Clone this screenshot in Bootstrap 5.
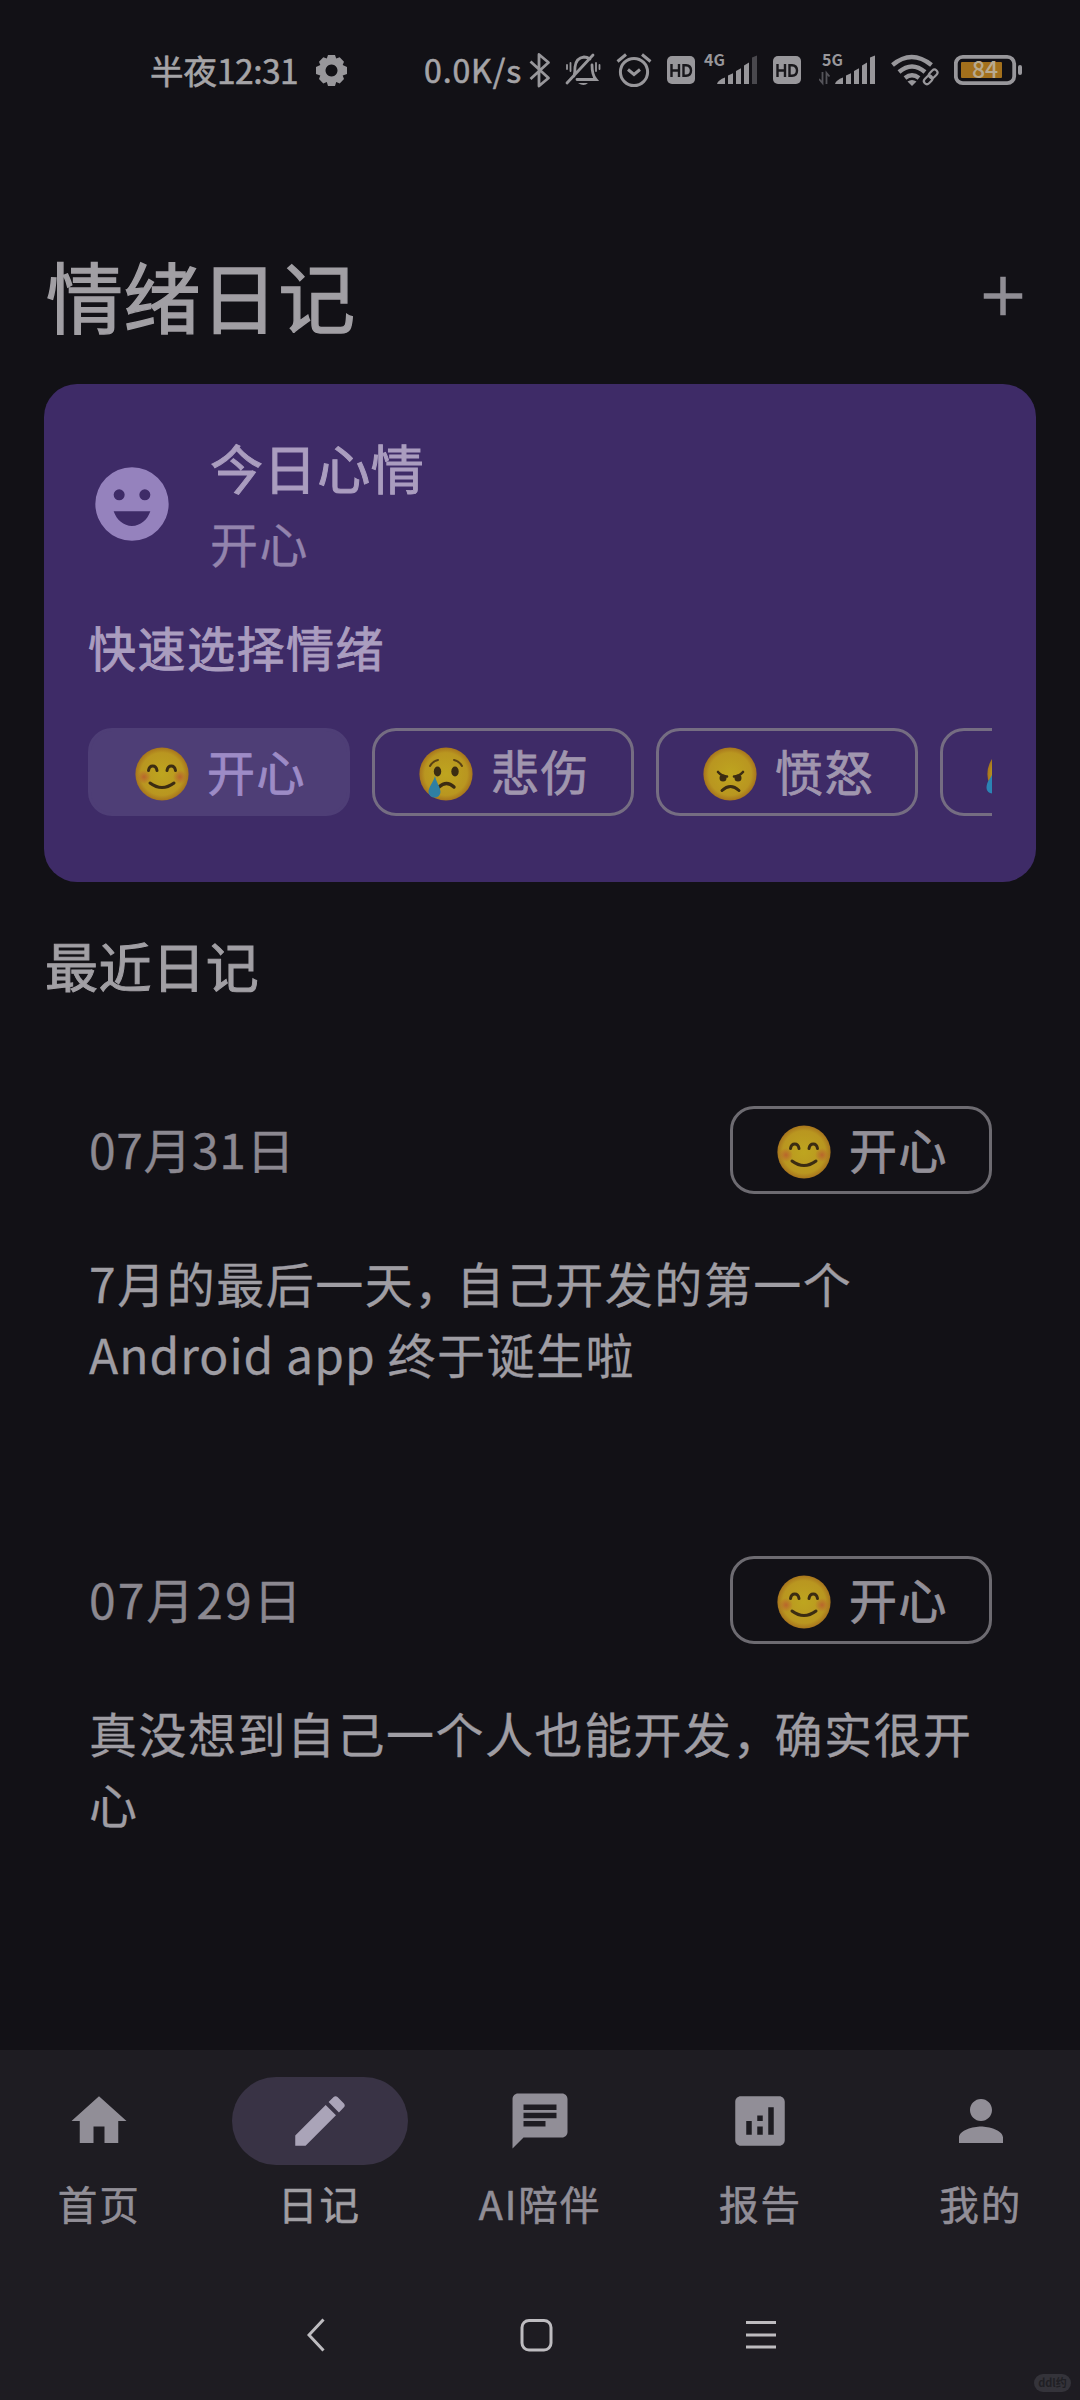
<!DOCTYPE html>
<html lang="zh-CN">
<head>
<meta charset="utf-8">
<meta name="viewport" content="width=device-width, initial-scale=1">
<title>情绪日记</title>
<link href="https://cdn.jsdelivr.net/npm/bootstrap@5.3.0/dist/css/bootstrap.min.css" rel="stylesheet">
<style>
  :root { --ink: #a19fa4; --ink-2: #8f8c94; --surface: #121116; --bar: #1e1c22; }
  body { background: var(--surface); color: var(--ink); font-family: "Noto Sans CJK SC", "Noto Sans", sans-serif; }
  svg { display: block; flex: none; }
  .phone { width: 1080px; height: 2400px; overflow: hidden; }
  .statusbar { height: 140px; padding: 50px 58px 0 150px; }
  .statusbar .st { line-height: 39px; font-size: 33.5px; white-space: nowrap; color: #a5a4a7; -webkit-text-stroke: .6px; }
  .net { font-size: 16px; line-height: 18px; font-weight: 700; color: #98979b; width: 0; white-space: nowrap; }
  .topbar { height: 244px; padding: 109px 44px 0 46px; }
  .topbar h1 { font-size: 77px; line-height: 92px; font-weight: 400; margin: 0; letter-spacing: .4px; -webkit-text-stroke: 1.4px; }
  .mood { margin: 0 44px; height: 498px; background: #3e2b67; border-radius: 33px; border: 0; padding: 44px; color: #aa9dbf; }
  .t-lg { font-size: 53px; letter-spacing: .6px; -webkit-text-stroke: 1px; }
  .t-md { font-size: 48px; letter-spacing: 1.5px; -webkit-text-stroke: .3px; }
  .chips { gap: 22px; overflow: hidden; }
  .chip { height: 88px; width: 262px; flex: none; border: 3px solid #756d82; border-radius: 24px; padding: 0 0 4px 43px; font-size: 48px; letter-spacing: 1.5px; line-height: 78px; color: #a096ae; -webkit-text-stroke: .8px; }
  .chip.on { background: #4e3e76; border-color: #4e3e76; color: #9d8bc6; }
  .chip svg { margin: 7px 17px 0 0; }
  .entry { height: 450px; padding: 0 88px; }
  .entry .chip { border-color: #6d6b71; color: #939098; }
  .entry .day { color: #8b8890; line-height: 85px; letter-spacing: .6px; padding-left: 1px; }
  .entry p { margin: 53px 0 0; line-height: 71px; color: #9f9da3; padding-left: 1px; }
  .cm { letter-spacing: -6px; }
  .tabs { height: 350px; background: var(--bar); }
  .tabrow { gap: 22px; padding-top: 27px; height: 215px; color: #918e97; }
  .tab { flex: 1 1 0; font-size: 39.5px; letter-spacing: 2px; line-height: 56px; white-space: nowrap; -webkit-text-stroke: .6px; }
  .pill { width: 176px; height: 88px; border-radius: 44px; margin-bottom: 10px; }
  .tab.active { color: var(--ink); }
  .tab.active .pill { background: #393345; color: #aaa4b8; }
  .sysnav { padding: 53px 0 0 3px; }
  .wm { position: absolute; left: 1034px; top: 2374px; width: 37px; height: 18px; border-radius: 9px; background: #34333a; color: #201f24; font: 700 11px/17px "Noto Sans CJK SC", sans-serif; text-align: center; white-space: nowrap; }
</style>
</head>
<body>
<svg width="0" height="0" class="position-absolute" aria-hidden="true">
  <defs>
    <radialGradient id="gold"><stop offset="0" stop-color="#bea51f"/><stop offset=".8" stop-color="#b99620"/><stop offset="1" stop-color="#a7741d"/></radialGradient>
    <radialGradient id="cheek"><stop offset="0" stop-color="#b9662c"/><stop offset="1" stop-color="#b9662c" stop-opacity="0"/></radialGradient>
    <symbol id="happy" viewBox="0 0 56 56">
      <circle cx="28" cy="28" r="26.6" fill="url(#gold)"/>
      <circle cx="10" cy="31" r="7" fill="url(#cheek)"/><circle cx="46" cy="31" r="7" fill="url(#cheek)"/>
      <g fill="none" stroke="#3b2c12" stroke-width="3" stroke-linecap="round"><path d="M14.5 24.5c1-6 7.500-6 8.500 0M33 24.500c1-6 7.500-6 8.500 0"/><path d="M16 37q12 9 24 0"/></g>
    </symbol>
    <symbol id="sad" viewBox="0 0 56 56">
      <circle cx="28" cy="28" r="26.6" fill="url(#gold)"/>
      <g fill="#3b2c12"><ellipse cx="19.500" cy="25.500" rx="3.700" ry="5"/><ellipse cx="37" cy="25.500" rx="3.700" ry="5"/></g>
      <g fill="none" stroke="#5a4114" stroke-width="2" stroke-linecap="round"><path d="M12 20q3-5 8-6M36 14q5 1 8 6"/></g>
      <path d="M21 41q7.500-7 15 0" fill="none" stroke="#3b2c12" stroke-width="3.400" stroke-linecap="round"/>
      <path d="M17 30C15 37 10.500 41 10.500 46a6 5.500 0 0 0 12 0C22.500 41 18.500 37 17 30z" fill="#2f7fa3"/>
    </symbol>
    <symbol id="angry" viewBox="0 0 56 56">
      <circle cx="28" cy="28" r="26.6" fill="url(#gold)"/>
      <g fill="#3b2c12"><circle cx="21" cy="32" r="3.500"/><circle cx="36" cy="32" r="3.500"/></g>
      <g fill="none" stroke="#3b2c12" stroke-width="2.600" stroke-linecap="round"><path d="M16 26q4 4.500 9 4.500M41 26q-4 4.500-9 4.500"/><path d="M20 44.500q8.500-8 17 0" stroke-width="3"/></g>
    </symbol>
    <symbol id="anxious" viewBox="0 0 56 56">
      <circle cx="28" cy="28" r="26.600" fill="url(#gold)"/>
      <path d="M6 29C4 33 .5 36 .5 42a6 5.500 0 0 0 12 0C12 38 8 35 6 29z" fill="#2b84b4"/>
    </symbol>
    <symbol id="hd" viewBox="0 0 28 40"><rect y="6" width="28" height="28" rx="5" fill="#98979b"/><g fill="none" stroke="#19181c" stroke-width="2.400"><path d="M4.500 14v13M12 14v13M4.500 20.500H12M16.500 15.200V25.800H19q5-.3 5-5.300t-5-5.300z"/></g></symbol>
    <symbol id="bars" viewBox="0 0 40 40"><path d="M0 34q1-4 8-6.500V34zM11 25.500l5-2.300V34h-5zM19 21l5-2.800V34h-5zM27 15.500l5-3V34h-5z"/></symbol>
  </defs>
</svg>
<main class="phone position-relative d-flex flex-column">

  <header class="statusbar d-flex align-items-start" style="fill:#98979b">
    <span class="st" style="width:166px">半夜<span style="letter-spacing:-.500px">12:31</span></span>
    <svg width="31" height="40" viewBox="0 0 31 40"><path fill-rule="evenodd" d="M12 5h7l1.200 3.500 3.500-1.300 4.300 4.500-1.300 3.300L31 17v7l-4.300 1.500 1.300 3.500-4.300 4.500-3.500-1.500L19 36h-7l-1.200-4-3.500 1.500L3 29l1.300-3.500L0 24v-7l4.300-2L3 11.700l4.300-4.500 3.500 1.300zM15.500 14.500a6 6 0 1 0 .01 0z"/></svg>
    <span class="st" style="margin-left:77px;width:105px;font-size:32px;letter-spacing:.900px">0.0K/s</span>
    <svg width="22" height="40" viewBox="0 0 22 40" fill="none" stroke="#98979b" stroke-width="2.800" stroke-linejoin="round"><path d="M1.500 11.500 19.500 28 10 36V4.500l9.500 8L1.500 29"/></svg>
    <svg style="margin-left:14px" width="36" height="40" viewBox="0 0 36 40" fill="none" stroke="#98979b" stroke-width="2.800" stroke-linecap="round"><path d="M9 26q1-3 1-9 1-9 9-10 3 0 6 2M27 15q0 10 4 14.500H12M2 33 28 5"/><path d="M5.500 13v8M2 15v4M31 13v8M34.500 15v4" stroke-width="1.800"/><path d="M13 33h10q-4 4-10 0z" fill="#98979b" stroke="none"/></svg>
    <svg style="margin-left:15px" width="36" height="40" viewBox="0 0 36 40" fill="none" stroke="#98979b" stroke-width="3"><circle cx="18" cy="22" r="13.600"/><path d="m12 19.500 6 5 6-5M1.500 11.500 10 4.500M34.500 11.500 26 4.500"/></svg>
    <svg style="margin-left:15px" width="28" height="40"><use href="#hd"/></svg>
    <span class="net" style="margin-left:9px">4G</span>
    <svg width="54" height="40" viewBox="0 0 54 40"><use href="#bars" x="13" width="40" height="40"/><path d="M48 7.500l5-2V34h-5z" fill="#49484d"/></svg>
    <svg style="margin-left:15px" width="28" height="40"><use href="#hd"/></svg>
    <span class="net" style="margin-left:21px">5G</span>
    <svg style="margin-left:-3px" width="56" height="40" viewBox="0 0 56 40"><path d="M3.500 22v11L0 29M7.500 34V23l3 3.500" fill="none" stroke="#55545a" stroke-width="1.800"/><use href="#bars" x="16" width="40" height="40"/><path d="M51 7.500l5-2V34h-5z"/></svg>
    <svg style="margin-left:16px" width="48" height="40" viewBox="0 0 48 40"><g fill="none" stroke="#98979b" stroke-width="4.400"><path d="M1.500 15q19-16 39 0M8 22q13-11 26 0"/><path d="M14 28q7-5.500 14 0"/></g><path d="M16.500 31.500q4.500-3 9 0L21 36z"/><g fill="none" stroke="#98979b" stroke-width="2.200"><rect x="-3" y="-5" width="6" height="9.500" rx="3" transform="translate(42 24) rotate(45)"/><rect x="-3" y="-5" width="6" height="9.500" rx="3" transform="translate(37 30) rotate(45)"/></g></svg>
    <svg style="margin-left:15px" width="68" height="40" viewBox="0 0 68 40"><rect x="1.800" y="6.800" width="58.400" height="26.400" rx="7" fill="none" stroke="#98979b" stroke-width="3.800"/><rect x="7" y="12" width="41" height="16" rx="1" fill="#a3701c"/><rect x="64" y="15" width="4" height="10" rx="2"/><text x="31" y="28" text-anchor="middle" font-size="23" font-weight="500" font-family="Noto Sans CJK SC, sans-serif" fill="#b8aa90">84</text></svg>
  </header>

  <div class="topbar d-flex justify-content-between">
    <h1>情绪日记</h1>
    <svg width="66" height="66" viewBox="0 0 24 24" fill="#8f8d94" style="margin:14px 0 0"><path d="M19 13h-6v6h-2v-6H5v-2h6V5h2v6h6v2z"/></svg>
  </div>

  <section class="card mood">
    <div class="d-flex align-items-center">
      <svg width="88" height="88" viewBox="0 0 24 24" fill="#9582bd"><path fill-rule="evenodd" d="M12 2a10 10 0 1 0 0 20 10 10 0 0 0 0-20zM8.500 8a1.500 1.500 0 1 1 0 3 1.500 1.500 0 0 1 0-3zM15.500 8a1.500 1.500 0 1 1 0 3 1.500 1.500 0 0 1 0-3zM12 18c-2.280 0-4.220-1.660-5-4h10c-.780 2.340-2.720 4-5 4z"/></svg>
      <div style="margin-left:34px">
        <div class="t-lg" style="line-height:79px">今日心情</div>
        <div class="t-md" style="line-height:71px;margin-bottom:2px;color:#9384ad">开心</div>
      </div>
    </div>
    <div class="t-md" style="line-height:71px;margin:31px 0 46px;-webkit-text-stroke:.900px">快速选择情绪</div>
    <div class="chips d-flex">
      <div class="chip on d-flex align-items-center"><svg width="56" height="56"><use href="#happy"/></svg>开心</div>
      <div class="chip d-flex align-items-center"><svg width="56" height="56"><use href="#sad"/></svg>悲伤</div>
      <div class="chip d-flex align-items-center"><svg width="56" height="56"><use href="#angry"/></svg>愤怒</div>
      <div class="chip d-flex align-items-center"><svg width="56" height="56"><use href="#anxious"/></svg></div>
    </div>
  </section>

  <h2 class="t-lg fw-normal" style="margin:43px 44px 0 45px;height:181px;line-height:80px">最近日记</h2>

  <article class="entry t-md">
    <div class="d-flex justify-content-between"><span class="day">07月31日</span><div class="chip d-flex align-items-center"><svg width="56" height="56"><use href="#happy"/></svg>开心</div></div>
    <p>7月的最后一天<span class="cm">，</span>自己开发的第一个<br><span style="letter-spacing:1px">Android app </span>终于诞生啦</p>
  </article>
  <article class="entry t-md">
    <div class="d-flex justify-content-between"><span class="day" style="letter-spacing:2px">07月29日</span><div class="chip d-flex align-items-center"><svg width="56" height="56"><use href="#happy"/></svg>开心</div></div>
    <p class="text-nowrap">真没想到自己一个人也能开发<span class="cm">，</span>确实很开<br>心</p>
  </article>

  <nav class="tabs mt-auto">
    <div class="tabrow d-flex">
      <div class="tab d-flex flex-column align-items-center"><div class="pill d-flex align-items-center justify-content-center"><svg width="66" height="66" viewBox="0 0 24 24" fill="currentColor"><path d="M10 20v-6h4v6h5v-8h3L12 3 2 12h3v8z"/></svg></div>首页</div>
      <div class="tab active d-flex flex-column align-items-center"><div class="pill d-flex align-items-center justify-content-center"><svg width="66" height="66" viewBox="0 0 24 24" fill="currentColor"><path d="M3 17.250V21h3.750L17.810 9.940l-3.750-3.750L3 17.250zM20.710 7.040c.390-.390.390-1.020 0-1.410l-2.340-2.340c-.390-.390-1.020-.390-1.410 0l-1.830 1.830 3.750 3.750 1.830-1.830z"/></svg></div>日记</div>
      <div class="tab d-flex flex-column align-items-center"><div class="pill d-flex align-items-center justify-content-center"><svg width="66" height="66" viewBox="0 0 24 24" fill="currentColor"><path d="M20 2H4c-1.100 0-1.990.9-1.990 2L2 22l4-4h14c1.100 0 2-.9 2-2V4c0-1.100-.9-2-2-2zM6 9h12v2H6V9zm8 5H6v-2h8v2zm4-6H6V6h12v2z"/></svg></div>AI陪伴</div>
      <div class="tab d-flex flex-column align-items-center"><div class="pill d-flex align-items-center justify-content-center"><svg width="66" height="66" viewBox="0 0 24 24" fill="currentColor"><path d="M19 3H5c-1.100 0-2 .9-2 2v14c0 1.100.9 2 2 2h14c1.100 0 2-.9 2-2V5c0-1.100-.9-2-2-2zM9 17H7v-5h2v5zm4 0h-2v-3h2v3zm0-5h-2v-2h2v2zm4 5h-2V7h2v10z"/></svg></div>报告</div>
      <div class="tab d-flex flex-column align-items-center"><div class="pill d-flex align-items-center justify-content-center"><svg width="66" height="66" viewBox="0 0 24 24" fill="currentColor"><path d="M12 12c2.210 0 4-1.790 4-4s-1.790-4-4-4-4 1.790-4 4 1.790 4 4 4zm0 2c-2.670 0-8 1.340-8 4v2h16v-2c0-2.660-5.330-4-8-4z"/></svg></div>我的</div>
    </div>
    <div class="sysnav d-flex justify-content-center" style="fill:none;stroke:#bebcc0;stroke-width:3">
      <svg width="18" height="34" viewBox="0 0 18 34"><path d="M16.500 1.500 2 17l14.500 15.500"/></svg>
      <svg style="margin:0 193px 0 195px" width="33" height="34" viewBox="0 0 33 34"><rect x="2" y="2.500" width="29" height="29.500" rx="7"/></svg>
      <svg width="30" height="34" viewBox="0 0 30 34"><path d="M0 4.500h30M0 17h30M0 29h30"/></svg>
    </div>
  </nav>
  <span class="wm">ddl约</span>
</main>
<script src="https://cdn.jsdelivr.net/npm/bootstrap@5.3.0/dist/js/bootstrap.bundle.min.js"></script>
</body>
</html>
